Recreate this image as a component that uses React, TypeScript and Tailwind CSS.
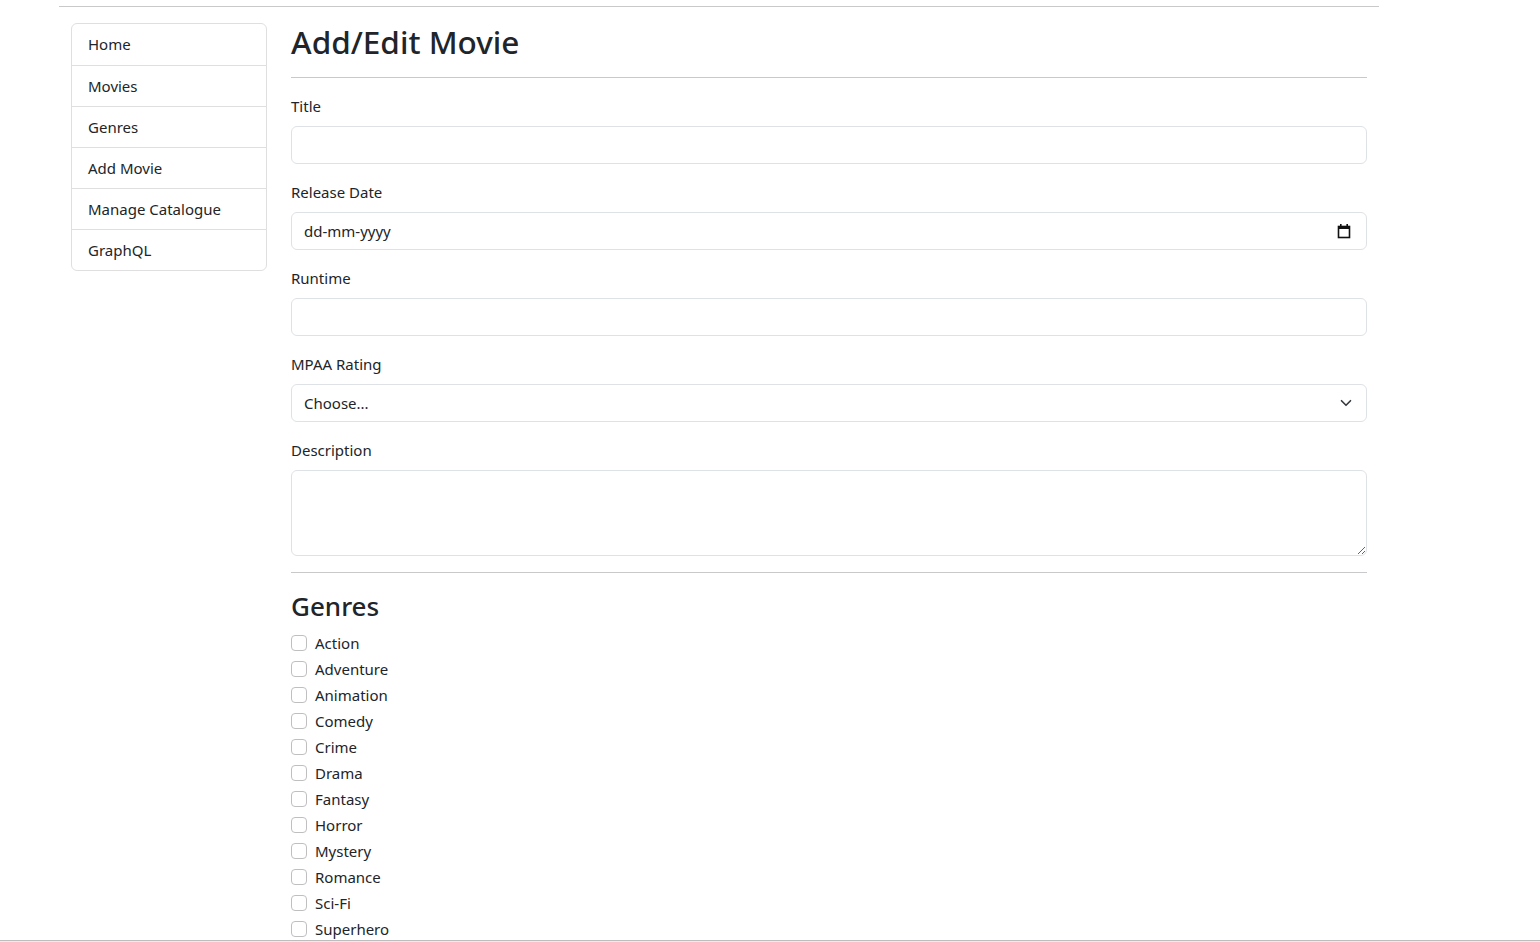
import React from "react";

const navItems = ["Home", "Movies", "Genres", "Add Movie", "Manage Catalogue", "GraphQL"];

const genres = [
  "Action",
  "Adventure",
  "Animation",
  "Comedy",
  "Crime",
  "Drama",
  "Fantasy",
  "Horror",
  "Mystery",
  "Romance",
  "Sci-Fi",
  "Superhero",
];

const inputCls =
  "block w-full h-[38px] rounded-[6px] border border-[#dee2e6] bg-white px-3 text-[15px] text-[#212529] outline-none";

function Field({ label, children }: { label: string; children: React.ReactNode }) {
  return (
    <div className="mb-4">
      <label className="mb-2 block leading-6">{label}</label>
      {children}
    </div>
  );
}

export default function App() {
  return (
    <div
      className="flex h-screen flex-col overflow-hidden bg-white text-[15px] text-[#212529]"
      style={{ fontFamily: '"Noto Sans", "Open Sans", sans-serif' }}
    >
      <div className="flex-1 overflow-hidden">
        <div className="ml-[59px] w-[1320px]">
          <hr className="mt-[6px] border-t border-[#c8c9ca]" />
          <div className="mt-4 flex gap-6 px-3">
            {/* sidebar */}
            <nav className="w-[196px] shrink-0">
              <div className="overflow-hidden rounded-[6px] border border-[#dfdfdf]">
                {navItems.map((item, i) => (
                  <a
                    key={item}
                    href="#!"
                    className={`block h-[41px] px-4 leading-[40px] text-[#212529] ${
                      i > 0 ? "border-t border-[#dfdfdf]" : ""
                    }`}
                  >
                    {item}
                  </a>
                ))}
              </div>
            </nav>

            {/* main */}
            <main className="w-[1076px]">
              <h2 className="text-[31.5px] font-medium leading-[38px]">Add/Edit Movie</h2>
              <hr className="mb-4 mt-4 border-t border-[#c8c9ca]" />

              <form>
                <Field label="Title">
                  <input type="text" className={inputCls} />
                </Field>

                <Field label="Release Date">
                  <div className={`${inputCls} flex items-center justify-between`}>
                    <span>dd-mm-yyyy</span>
                    <svg width="14" height="16" viewBox="0 0 14 16" className="mr-[3px]">
                      <rect x="1.5" y="3.5" width="11" height="11" fill="none" stroke="#111" strokeWidth="1.6" />
                      <rect x="1" y="3" width="12" height="3" fill="#111" />
                      <rect x="3" y="1" width="1.6" height="3" fill="#111" />
                      <rect x="9.4" y="1" width="1.6" height="3" fill="#111" />
                    </svg>
                  </div>
                </Field>

                <Field label="Runtime">
                  <input type="text" className={inputCls} />
                </Field>

                <Field label="MPAA Rating">
                  <div className="relative">
                    <select className={`${inputCls} appearance-none pr-9`} defaultValue="">
                      <option value="">Choose...</option>
                      <option>G</option>
                      <option>PG</option>
                      <option>PG13</option>
                      <option>R</option>
                      <option>NC17</option>
                    </select>
                    <svg
                      width="12"
                      height="12"
                      viewBox="0 0 16 16"
                      className="pointer-events-none absolute right-[15px] top-[13px]"
                    >
                      <path d="m2 5 6 6 6-6" fill="none" stroke="#343a40" strokeWidth="2.2" strokeLinecap="round" strokeLinejoin="round" />
                    </svg>
                  </div>
                </Field>

                <Field label="Description">
                  <textarea className="block h-[86px] w-full rounded-[6px] border border-[#dee2e6] px-3 py-1.5 outline-none" />
                </Field>

                <hr className="mb-4 border-t border-[#c8c9ca]" />

                <h3 className="mb-2 text-[26px] font-medium leading-[34px]">Genres</h3>
                {genres.map((g) => (
                  <div key={g} className="mb-[2px] flex h-6 items-center">
                    <input
                      type="checkbox"
                      id={`genre-${g}`}
                      className="h-4 w-4 appearance-none rounded-[4px] border border-[#bfbfbf] bg-white"
                    />
                    <label htmlFor={`genre-${g}`} className="ml-2 leading-6">
                      {g}
                    </label>
                  </div>
                ))}
              </form>
            </main>
          </div>
        </div>
      </div>
      <div className="h-[2px] shrink-0 border-t border-[#bdbdbd] bg-[#ececec]" />
    </div>
  );
}
